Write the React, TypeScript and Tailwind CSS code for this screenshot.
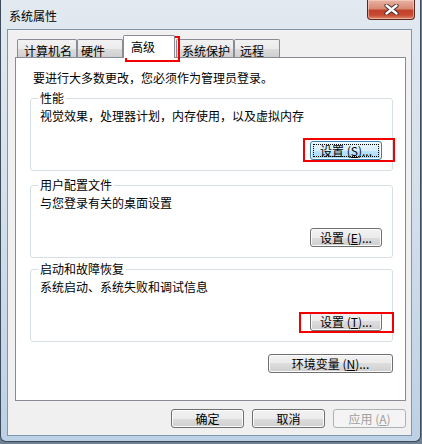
import React from 'react';

const btnBase = 'flex items-center justify-center h-[19px] rounded-[3px] border text-[12px] leading-[12px]';
const btnNormal = 'border-[#707070] text-black bg-[linear-gradient(to_bottom,#f2f2f2_0%,#ebebeb_50%,#dddddd_50%,#cfcfcf_100%)] shadow-[inset_0_0_0_1px_#fbfbfb]';
const btnFocus = 'border-[#3c7fb1] text-black bg-[linear-gradient(to_bottom,#eaf6fd_0%,#d9f0fc_50%,#bee6fd_50%,#a7d9f5_100%)] shadow-[inset_0_0_0_1px_#f4fbfe] p-[2px]';
const btnDisabled = 'border-[#adb2b5] text-[#a0a0a0] bg-[#f4f4f4]';

const tabNormal = 'h-[18px] border border-b-0 border-[#898c95] rounded-t-[2px] pt-[2px] bg-[linear-gradient(to_bottom,#f2f2f2_0%,#ebebeb_50%,#dddddd_50%,#cfcfcf_100%)]';

const Mnemonic = ({ k }: { k: string }) => (
  <>
    {' '}(<span className="underline">{k}</span>)...
  </>
);

const Group = ({ title, desc, button, focused }: { title: string; desc: string; button: React.ReactNode; focused?: boolean }) => (
  <div className="relative ml-[14px] w-[363px] h-[73px] border border-[#d5dfe5] rounded-[3px] flex flex-col">
    <span className="absolute left-[7px] -top-[7px] bg-white px-[2px] leading-[12px]">{title}</span>
    <p className="ml-[9px] mt-[11px] leading-[12px]">{desc}</p>
    <div className={`${btnBase} ${focused ? btnFocus : btnNormal} self-end mt-auto mr-[10px] mb-[10px] w-[72px]`}>
      {focused ? (
        <span className="flex-1 self-stretch flex items-center justify-center border border-dotted border-black">{button}</span>
      ) : (
        button
      )}
    </div>
  </div>
);

export default function App() {
  return (
    <div className="relative w-[422px] h-[444px] overflow-hidden bg-[#6f8193] text-[12px] text-black font-['Noto_Sans_CJK_SC','Liberation_Sans',sans-serif]">
      <div className="w-[421px] h-[442px] flex flex-col border-x border-b border-[#3d4b5a] rounded-b-[6px] pl-[6px] pr-[8px] bg-[linear-gradient(to_bottom,#e2e9f0_0%,#d6e1ec_40%,#bcd1e6_100%)]">
        {/* title bar */}
        <div className="h-[29px] flex justify-between items-start">
          <span className="pl-[2px] pt-[10px] leading-[12px]">系统属性</span>
          <div className="-mr-[3px] w-[48px] h-[20px] rounded-b-[4px] border border-t-0 border-[#5a2a22] flex items-center justify-center bg-[linear-gradient(to_bottom,#e9b2a3_0%,#d88a75_45%,#c2412b_55%,#c84a32_80%,#dc8c6e_100%)] shadow-[inset_0_0_0_1px_rgba(255,220,210,0.5)]">
            <svg width="15" height="11" viewBox="0 0 15 11">
              <path d="M2.5 1.5 L12.5 9.5 M12.5 1.5 L2.5 9.5" stroke="#3d2b28" strokeWidth="4.2" strokeLinecap="round" />
              <path d="M2.5 1.5 L12.5 9.5 M12.5 1.5 L2.5 9.5" stroke="#ffffff" strokeWidth="2.4" strokeLinecap="round" />
            </svg>
          </div>
        </div>

        {/* client area */}
        <div className="w-[405px] h-[407px] border border-[#8296ab] bg-[#f0f0f0] flex flex-col">
          <div className="mt-[5px] pl-[9px] h-[22px] flex items-end">
            <div className={`${tabNormal} w-[60px] pl-[6px]`}><span className="leading-[12px]">计算机名</span></div>
            <div className={`${tabNormal} w-[46px] pl-[3px]`}><span className="leading-[12px]">硬件</span></div>
            <div className="relative z-10 -mb-px h-[23px] w-[52px] pl-[7px] pt-[5px] bg-white border border-b-0 border-[#898c95] rounded-t-[2px] leading-[12px]">高级</div>
            <div className={`${tabNormal} ml-px w-[58px] pl-[5px]`}><span className="leading-[12px]">系统保护</span></div>
            <div className={`${tabNormal} w-[46px] pl-[5px]`}><span className="leading-[12px]">远程</span></div>
          </div>

          <div className="ml-[7px] w-[391px] h-[344px] bg-white border border-[#898c95] flex flex-col">
            <p className="ml-[17px] mt-[14px] leading-[12px]">要进行大多数更改，您必须作为管理员登录。</p>
            <div className="mt-[14px]">
              <Group title="性能" desc="视觉效果，处理器计划，内存使用，以及虚拟内存" button={<>设置<Mnemonic k="S" /></>} focused />
            </div>
            <div className="mt-[14px]">
              <Group title="用户配置文件" desc="与您登录有关的桌面设置" button={<>设置<Mnemonic k="E" /></>} />
            </div>
            <div className="mt-[11px]">
              <Group title="启动和故障恢复" desc="系统启动、系统失败和调试信息" button={<>设置<Mnemonic k="T" /></>} />
            </div>
            <div className={`${btnBase} ${btnNormal} self-end mt-[12px] mr-[12px] w-[125px]`}>
              环境变量<Mnemonic k="N" />
            </div>
          </div>

          <div className="ml-[7px] w-[391px] mt-[8px] flex justify-end gap-[8px]">
            <div className={`${btnBase} ${btnNormal} w-[73px]`}>确定</div>
            <div className={`${btnBase} ${btnNormal} w-[73px]`}>取消</div>
            <div className={`${btnBase} ${btnDisabled} w-[73px]`}>应用 (<span className="underline">A</span>)</div>
          </div>
        </div>
      </div>

      {/* red annotation boxes */}
      <div className="absolute left-[125px] top-[36px] w-[55px] h-[26px] border-2 border-[#f20000]" />
      <div className="absolute left-[303px] top-[138px] w-[92px] h-[24px] border-2 border-[#f20000]" />
      <div className="absolute left-[299px] top-[312px] w-[95px] h-[21px] border-2 border-[#f20000]" />
    </div>
  );
}
